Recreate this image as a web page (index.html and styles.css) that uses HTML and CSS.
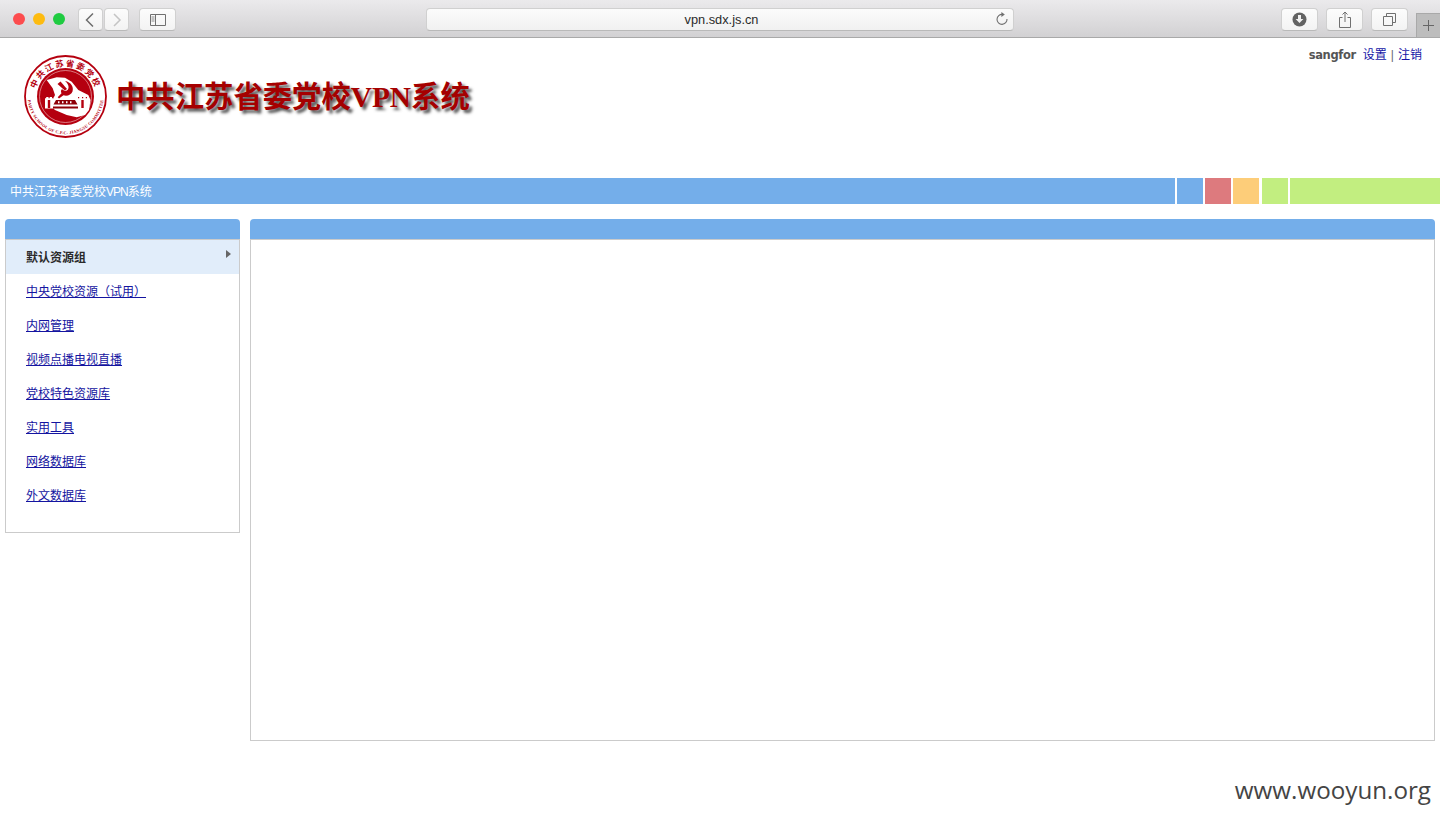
FILE: index.html
```html
<!DOCTYPE html>
<html lang="zh-CN">
<head>
<meta charset="utf-8">
<title>中共江苏省委党校VPN系统</title>
<link rel="stylesheet" href="styles.css">
</head>
<body>
<div class="toolbar">
  <div class="lights"><span class="dot red"></span><span class="dot amber"></span><span class="dot green"></span></div>
  <div class="nav">
    <div class="btn nav-btn"><svg width="12" height="16" viewBox="0 0 12 16"><path d="M8 1.500 1.500 8 8 14.500" fill="none" stroke="#6d6d6d" stroke-width="1.500"/></svg></div>
    <div class="btn nav-btn"><svg width="12" height="16" viewBox="0 0 12 16"><path d="m3 2 6 6-6 6" fill="none" stroke="#c4c4c4" stroke-width="1.500"/></svg></div>
  </div>
  <div class="btn wide side-btn"><svg width="16" height="12" viewBox="0 0 16 12"><path d="M.5.5h15v11H.5zM5.5.5v11" fill="none" stroke="#707070"/><path d="M1.500 3h3M1.500 5h3M1.500 7h3" stroke="#8a8a8a"/></svg></div>
  <div class="address"><span class="url">vpn.sdx.js.cn</span>
    <svg class="reload" width="14" height="14" viewBox="0 0 14 14"><path d="M7.500 2.400A5 5 0 1 0 12 7" fill="none" stroke="#707070" stroke-width="1.100"/><path d="M6.400 0v5l3.400-2.500z" fill="#707070"/></svg>
  </div>
  <div class="actions">
    <div class="btn wide"><svg width="15" height="15" viewBox="0 0 15 15"><circle cx="7.500" cy="7.500" r="7" fill="#636363"/><path d="M6 3h3v4h2.400l-3.900 4-3.900-4H6z" fill="#f2f2f2"/></svg></div>
    <div class="btn wide"><svg width="12" height="17" viewBox="0 0 12 17"><path d="M3.500 6.500H.5v10h11v-10h-3M6 11V1M3.500 3.500 6 1l2.500 2.500" fill="none" stroke="#707070"/></svg></div>
    <div class="btn wide"><svg width="13" height="13" viewBox="0 0 13 13"><path d="M.5 3.500h9v9h-9zM3.500 3.500v-3h9v9h-3" fill="none" stroke="#707070"/></svg></div>
  </div>
  <div class="new-tab"><svg width="11" height="11" viewBox="0 0 11 11"><path d="M5.500 0v11M0 5.500h11" stroke="#666"/></svg></div>
</div>

<header class="banner">
  <div class="brand">
    <svg class="logo" width="84" height="84" viewBox="0 0 84 84">
      <defs>
        <path id="arc-top" d="M12.400 53A31 31 0 1 1 70.600 53"/>
        <path id="arc-bottom" d="M4 35A38 38 0 1 0 79 35"/>
      </defs>
      <circle cx="41.500" cy="41.500" r="40.500" fill="#fff" stroke="#b5000f" stroke-width="1.800"/>
      <circle cx="41.500" cy="41.500" r="28.500" fill="#b5000f"/>
      <circle cx="41.500" cy="41.500" r="26" fill="none" stroke="#f3c9cb" stroke-width=".6"/>
      <text class="logo-cn"><textPath href="#arc-top" startOffset="50%" text-anchor="middle">中共江苏省委党校</textPath></text>
      <text class="logo-en"><textPath href="#arc-bottom" startOffset="50%" text-anchor="middle">PARTY SCHOOL OF C.P.C. JIANGSU COMMITTEE</textPath></text>
      <path d="M22.700 25 32.700 22.300 41 22.700 47.700 26.700 54.300 35 64.300 40 66.500 45 65 55 61 60 52.700 62.300 42.700 60 31 55 26 50 31 40 28.700 33.300z" fill="#fff"/>
      <path d="M41 26c6 1 9 6 7.500 10.500-1.200 3.500-5.500 5-9 3.800L35 43.500l-1.300-1.300 3.800-4c-1-1.800-.5-3 .5-4.200 1.800 2.300 4.700 2.400 6 .4 1.400-2.200.2-6-3-8.400z" fill="#b5000f"/>
      <path d="m33.500 29 3-2.500 6.500 7.500-2.200 1.500z" fill="#b5000f"/>
      <path d="M21 42h8.300v11.500H21zM54 42h9v11.500h-9z" fill="#fff"/>
      <path d="M23.800 45h2.400v8h-2.400zM57.300 45h2.400v8h-2.400zM21 42h1.200v1.200H21zM24.500 42h1.200v1.200h-1.200zM28 42h1.200v1.200H28zM54 42h1.200v1.200H54zM58 42h1.200v1.200H58zM61.800 42h1.200v1.200h-1.200z" fill="#b5000f"/>
      <path d="M29 51.500h25v2H29zM32 45h19l2.500 4.500h-24z" fill="#8f0008"/>
      <path d="M34 46.300h1.500v2H34zM38 46.300h1.500v2H38zM42 46.300h1.500v2H42zM46 46.300h1.500v2H46z" fill="#fff"/>
    </svg>
    <h1 class="title">中共江苏省委党校VPN系统</h1>
  </div>
  <div class="user"><span class="user-name">sangfor</span><a href="#">设置</a><span class="sep">|</span><a href="#">注销</a></div>
</header>

<div class="strip">
  <div class="strip-title">中共江苏省委党校<span class="latin">VPN</span>系统</div>
  <div class="swatch swatch-blue"></div>
  <div class="swatch swatch-red"></div>
  <div class="swatch swatch-orange"></div>
  <div class="swatch swatch-green"></div>
  <div class="swatch swatch-rest"></div>
</div>

<main class="content">
  <aside class="panel side">
    <div class="panel-head"></div>
    <ul class="panel-body menu">
      <li class="menu-item active"><span>默认资源组</span><i class="arrow"></i></li>
      <li class="menu-item"><a href="#">中央党校资源（试用）</a></li>
      <li class="menu-item"><a href="#">内网管理</a></li>
      <li class="menu-item"><a href="#">视频点播电视直播</a></li>
      <li class="menu-item"><a href="#">党校特色资源库</a></li>
      <li class="menu-item"><a href="#">实用工具</a></li>
      <li class="menu-item"><a href="#">网络数据库</a></li>
      <li class="menu-item"><a href="#">外文数据库</a></li>
    </ul>
  </aside>
  <section class="panel primary">
    <div class="panel-head"></div>
    <div class="panel-body"></div>
  </section>
</main>

<div class="watermark">www.wooyun.org</div>
</body>
</html>
```

FILE: styles.css
```css
* { box-sizing: border-box; }
html, body { margin: 0; padding: 0; }
body {
  width: 1440px;
  height: 819px;
  overflow: hidden;
  position: relative;
  background: #fff;
  font: 12px/1.2 "Liberation Sans", "Noto Sans CJK SC", sans-serif;
}

/* browser toolbar */
.toolbar {
  height: 38px;
  display: flex;
  align-items: flex-start;
  padding: 8px 0 0 13px;
  background: linear-gradient(#ebeaec, #d2d1d3);
  border-bottom: 1px solid #a9a9a9;
}
.lights { display: flex; gap: 8px; margin-top: 5px; margin-right: 13px; }
.dot { width: 12px; height: 12px; border-radius: 50%; }
.red { background: #fc4c4e; }
.amber { background: #fdbb10; }
.green { background: #1fcb41; }
.nav { display: flex; gap: 1px; margin-right: 10px; }
.btn {
  height: 23px;
  display: flex;
  align-items: center;
  justify-content: center;
  background: linear-gradient(#fcfcfc, #f3f3f3);
  border: 1px solid #d0d0d0;
  border-bottom-color: #b9b9b9;
  border-radius: 4px;
}
.nav-btn { width: 25px; }
.wide { width: 37px; }
.side-btn { margin-right: 250px; }
.address {
  position: relative;
  width: 588px;
  height: 23px;
  display: flex;
  align-items: center;
  justify-content: center;
  padding: 1px 0 0 3px;
  background: linear-gradient(#fbfbfb, #f1f1f1);
  border: 1px solid #d0d0d0;
  border-bottom-color: #b9b9b9;
  border-radius: 4px;
}
.url { font-size: 12.800px; color: #2b2b2b; }
.reload { position: absolute; right: 4px; top: 3px; }
.actions { display: flex; gap: 8px; margin-left: 267px; }
.new-tab {
  width: 24px;
  height: 24px;
  margin: 5px 0 0 8px;
  display: flex;
  align-items: center;
  justify-content: center;
  background: #bdbdbd;
  border-left: 1px solid #a9a9a9;
  border-top: 1px solid #a9a9a9;
}

/* page header */
.banner {
  height: 140px;
  display: flex;
  justify-content: space-between;
  align-items: flex-start;
  padding: 10px 18px 0 24px;
}
.brand { display: flex; align-items: center; gap: 10px; margin-top: 7px; }
.logo { display: block; }
.logo-cn { font: 700 8.300px "Noto Sans CJK SC", sans-serif; letter-spacing: 1.700px; fill: #b5000f; }
.logo-en { font: 700 4.200px "Liberation Serif", serif; letter-spacing: .3px; fill: #b5000f; }
.title {
  margin: 2px 0 0 -2px;
  font: 700 29.350px/1.2 "Liberation Serif", "Noto Sans CJK SC", serif;
  color: #a50000;
  white-space: nowrap;
  text-shadow: 3px 3px 3px #555;
}
.user { display: flex; align-items: center; color: #667; }
.user a { color: #1414a6; text-decoration: none; }
.user-name { font: 700 11.500px "DejaVu Sans", sans-serif; color: #555; margin-right: 7px; letter-spacing: -.35px; }
.sep { margin: 0 4px; }

/* title strip */
.strip { height: 26px; display: flex; gap: 2px; }
.strip-title {
  width: 1175px;
  padding: 1px 0 0 10px;
  line-height: 27px;
  color: #fff;
  background: #74aeea;
}
.latin { letter-spacing: -1px; }
.swatch { width: 26px; }
.swatch-blue { background: #74aeea; }
.swatch-red { background: #dd7a7e; }
.swatch-orange { background: #fdcd79; }
.swatch-green { width: 26px; margin-left: 1px; background: #c2ee80; }
.swatch-rest { flex: 1; background: #c2ee80; }

/* panels */
.content { display: flex; gap: 10px; align-items: flex-start; padding: 15px 5px 0; }
.panel { display: flex; flex-direction: column; }
.side { width: 235px; height: 314px; }
.primary { flex: 1; height: 522px; }
.panel-head { height: 20px; background: #74aeea; border-radius: 4px 4px 0 0; flex: none; }
.panel-body { flex: 1; margin: 0; padding: 0; border: 1px solid #cbcbcb; }
.menu { list-style: none; }
.menu-item {
  height: 34px;
  position: relative;
  padding: 1px 0 0 20px;
  line-height: 35px;
  color: #22224f;
}
.menu-item a { color: #1414a0; text-decoration: underline; }
.active { background: #e1edfa; color: #2a2a2a; font-weight: 700; }
.arrow {
  position: absolute;
  top: 10px;
  right: 8px;
  border-left: 5px solid #666;
  border-top: 4px solid transparent;
  border-bottom: 4px solid transparent;
}

/* watermark over the page */
.watermark {
  position: absolute;
  right: 9px;
  top: 775px;
  font: 24.200px/1.2 "Open Sans", sans-serif;
  color: #444;
}
```
